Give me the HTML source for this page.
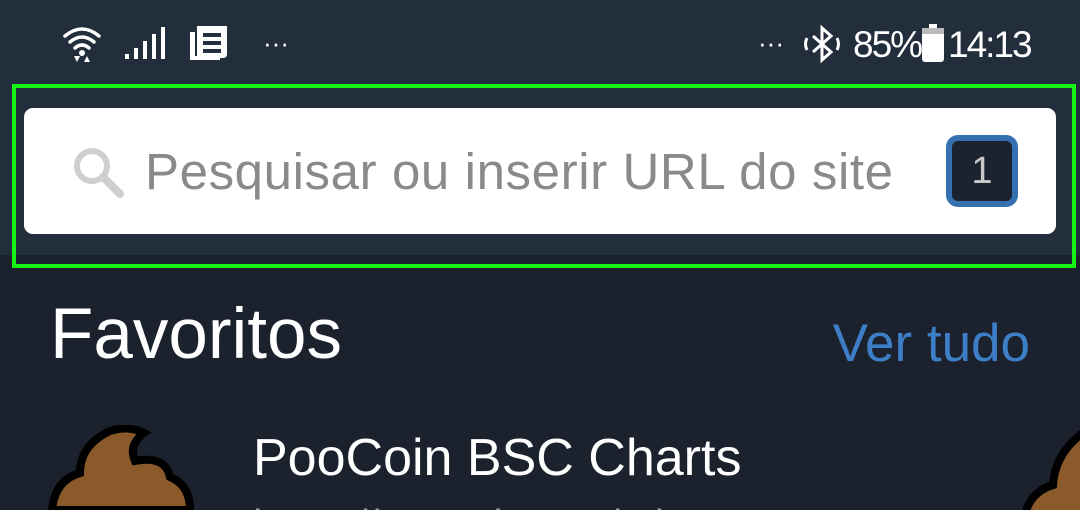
<!DOCTYPE html>
<html><head><meta charset="utf-8"><style>
*{margin:0;padding:0;box-sizing:border-box}
html,body{width:1080px;height:510px;overflow:hidden}
body{background:#1b222d;font-family:"Liberation Sans",sans-serif;position:relative}
.hdr{position:absolute;left:0;top:0;width:1080px;height:255px;background:#232e3c}
.abs{position:absolute;white-space:nowrap}
.green{position:absolute;left:12px;top:84px;width:1064px;height:184px;border:4px solid #16f316}
.search{position:absolute;left:24px;top:108px;width:1032px;height:126px;background:#fff;border-radius:9px}
.badge{position:absolute;left:946px;top:135px;width:72px;height:72px;border:6px solid #3570b0;background:#1b2330;border-radius:12px;color:#c8c8c8;font-size:38px;text-align:center;line-height:60px}
</style></head><body>
<div class="hdr"></div>
<svg class="abs" style="left:60px;top:24px" width="48" height="42" viewBox="0 0 48 42">
<g fill="none" stroke="#fff" stroke-width="3.5" stroke-linecap="round">
<path d="M5 12 Q22 -2 39 12"/><path d="M10 18 Q22 8 34 18"/><path d="M15 24 Q22 18 29 24"/></g>
<circle cx="22" cy="29" r="3" fill="#fff"/>
<path d="M14 32 L20 32 L17 38Z M24 38 L30 38 L27 32Z" fill="#fff"/>
</svg>
<svg class="abs" style="left:124px;top:26px" width="42" height="34"><g fill="#fff">
<rect x="1" y="28" width="4" height="5"/><rect x="10" y="22" width="4" height="11"/><rect x="19" y="15" width="4" height="18"/><rect x="28" y="8" width="4" height="25"/><rect x="37" y="1" width="4" height="32"/></g></svg>
<svg class="abs" style="left:189px;top:24px" width="42" height="38"><g fill="#fff">
<path d="M8 2 H38 V30 Q38 34 34 34 H8Z" /><rect x="1" y="8" width="5" height="28"/><rect x="1" y="32" width="30" height="4"/></g>
<g fill="#232e3c"><rect x="14" y="9" width="18" height="4"/><rect x="14" y="17" width="18" height="4"/><rect x="14" y="25" width="18" height="4"/></g></svg>
<div class="abs" style="left:263px;top:28px;color:#fff;font-size:26px">···</div>
<div class="abs" style="left:758px;top:28px;color:#fff;font-size:26px">···</div>
<svg class="abs" style="left:800px;top:24px" width="44" height="40" viewBox="0 0 44 40"><g fill="none" stroke="#fff" stroke-width="3">
<path d="M13 12 L31 28 L22 36 V4 L31 12 L13 28"/><path d="M7 14 Q4 20 7 26"/><path d="M37 14 Q40 20 37 26"/></g></svg>
<div class="abs" style="left:853px;top:24px;color:#fff;font-size:37px;letter-spacing:-2px">85%</div>
<svg class="abs" style="left:921px;top:24px" width="24" height="38"><rect x="8" y="0" width="8" height="4" fill="#fff"/><rect x="1" y="4" width="22" height="34" rx="3" fill="#fff"/><rect x="1" y="4" width="22" height="6" fill="#bbb"/></svg>
<div class="abs" style="left:948px;top:24px;color:#fff;font-size:37px;letter-spacing:-2px">14:13</div>

<div class="green"></div>
<div class="search">
<svg class="abs" style="left:46px;top:36px" width="56" height="56"><circle cx="22" cy="22" r="15" fill="none" stroke="#cfcfcf" stroke-width="6"/><path d="M33 33 L50 50" stroke="#cfcfcf" stroke-width="8" stroke-linecap="round"/></svg>
<div class="abs" style="left:121px;top:34px;font-size:51px;color:#8a8a8a;letter-spacing:0.6px">Pesquisar ou inserir URL do site</div>
</div>
<div class="badge">1</div>

<div class="abs" style="left:50px;top:294px;font-size:71px;color:#fff">Favoritos</div>
<div class="abs" style="right:50px;top:313px;font-size:53px;color:#3d7fc6">Ver tudo</div>

<svg class="abs" style="left:40px;top:425px" width="160" height="85"><path d="M70 6 Q40 20 40 48 Q15 55 12 85 L150 85 Q150 60 130 52 Q125 30 95 36 Q88 20 104 8 Q88 0 70 6Z" fill="#8b5a2b" stroke="#000" stroke-width="8"/></svg>
<svg class="abs" style="left:1015px;top:430px" width="65" height="80"><path d="M65 5 Q40 25 38 55 Q15 62 10 85 L70 85 L70 5Z" fill="#8b5a2b" stroke="#000" stroke-width="8"/></svg>
<div class="abs" style="left:253px;top:428px;font-size:52px;line-height:60px;color:#fff">PooCoin BSC Charts</div>
<div class="abs" style="left:253px;top:500px;width:500px;height:10px;overflow:hidden;font-size:42px;line-height:50px;color:#9aa3ad">https://poocoin.app/tok</div>
</body></html>
